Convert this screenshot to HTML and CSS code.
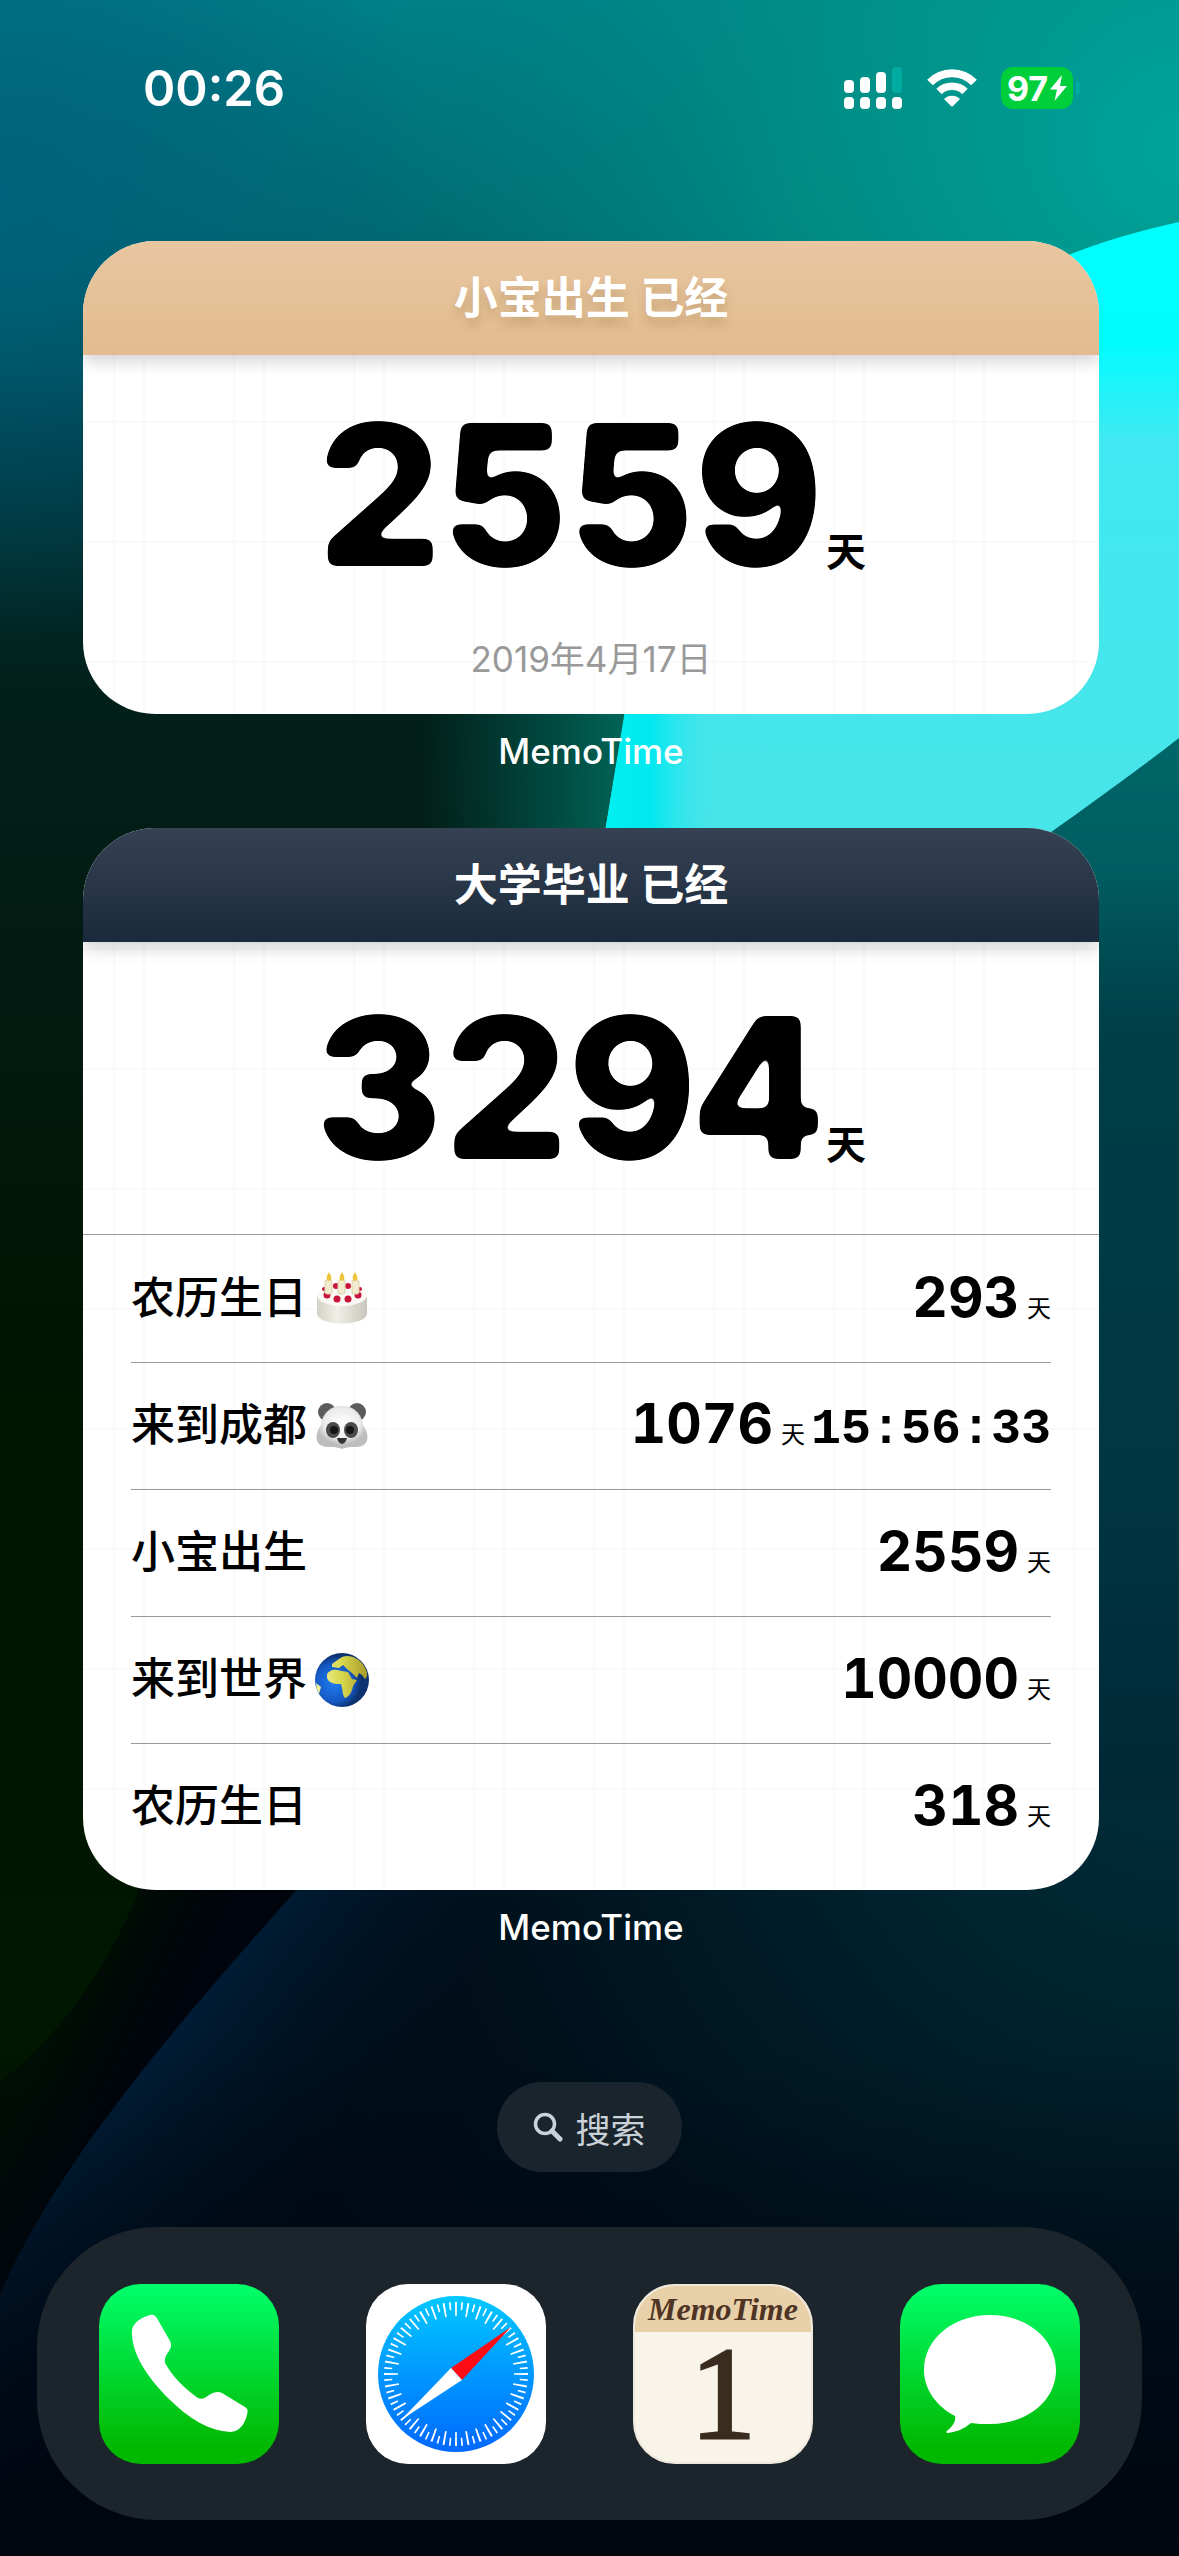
FILE: index.html
```html
<!DOCTYPE html>
<html lang="zh-CN">
<head>
<meta charset="utf-8">
<meta name="viewport" content="width=device-width, initial-scale=1">
<title>MemoTime</title>
<link rel="stylesheet" href="styles.css">
</head>
<body>
<svg class="wallpaper" viewBox="0 0 1179 2556" preserveAspectRatio="none" aria-hidden="true">
  <defs>
    <filter id="soften" x="-5%" y="-5%" width="110%" height="110%" color-interpolation-filters="sRGB">
      <feGaussianBlur stdDeviation="5"/>
      <feComponentTransfer><feFuncA type="linear" slope="14" intercept="-6.500"/></feComponentTransfer>
    </filter>
    <linearGradient id="base" x1="0" y1="0" x2="0" y2="1">
      <stop offset="0" stop-color="#008088"/>
      <stop offset=".09" stop-color="#006a70"/>
      <stop offset=".17" stop-color="#00353c"/>
      <stop offset=".27" stop-color="#02201a"/>
      <stop offset=".4" stop-color="#021a10"/>
      <stop offset=".55" stop-color="#001500"/>
      <stop offset=".8" stop-color="#001700"/>
      <stop offset="1" stop-color="#000610"/>
    </linearGradient>
    <radialGradient id="topRight" gradientUnits="userSpaceOnUse" cx="1179" cy="150" r="820">
      <stop offset="0" stop-color="#00a39a"/>
      <stop offset=".45" stop-color="#009488" stop-opacity=".8"/>
      <stop offset="1" stop-color="#008080" stop-opacity="0"/>
    </radialGradient>
    <radialGradient id="topLeft" gradientUnits="userSpaceOnUse" cx="0" cy="200" r="440">
      <stop offset="0" stop-color="#00607c" stop-opacity=".9"/>
      <stop offset=".5" stop-color="#00607c" stop-opacity=".5"/>
      <stop offset="1" stop-color="#006080" stop-opacity="0"/>
    </radialGradient>
    <linearGradient id="glow" gradientUnits="userSpaceOnUse" x1="420" y1="0" x2="640" y2="0">
      <stop offset="0" stop-color="#006058" stop-opacity="0"/>
      <stop offset="1" stop-color="#006a5c"/>
    </linearGradient>
    <linearGradient id="cyan" gradientUnits="userSpaceOnUse" x1="0" y1="220" x2="0" y2="830">
      <stop offset="0" stop-color="#00ffff"/>
      <stop offset=".2" stop-color="#00fcff"/>
      <stop offset=".36" stop-color="#40e9f2"/>
      <stop offset="1" stop-color="#48e4e8"/>
    </linearGradient>
    <linearGradient id="rim" gradientUnits="userSpaceOnUse" x1="605" y1="0" x2="720" y2="0">
      <stop offset="0" stop-color="#00f0f0"/>
      <stop offset=".4" stop-color="#00e8f0"/>
      <stop offset="1" stop-color="#48e4ea" stop-opacity="0"/>
    </linearGradient>
    <linearGradient id="right" gradientUnits="userSpaceOnUse" x1="0" y1="720" x2="0" y2="2000">
      <stop offset="0" stop-color="#006868"/>
      <stop offset=".12" stop-color="#005c60"/>
      <stop offset=".24" stop-color="#003e48"/>
      <stop offset=".6" stop-color="#003642"/>
      <stop offset=".8" stop-color="#002a38"/>
      <stop offset="1" stop-color="#001f2c"/>
    </linearGradient>
    <radialGradient id="deep" gradientUnits="userSpaceOnUse" cx="1179" cy="1700" r="1250">
      <stop offset="0" stop-color="#00303c"/>
      <stop offset=".3" stop-color="#00202c"/>
      <stop offset=".6" stop-color="#000f1a"/>
      <stop offset="1" stop-color="#000914"/>
    </radialGradient>
    <linearGradient id="edge" gradientUnits="userSpaceOnUse" x1="140" y1="2080" x2="310" y2="2210">
      <stop offset="0" stop-color="#001c34"/>
      <stop offset=".4" stop-color="#00162a" stop-opacity=".7"/>
      <stop offset="1" stop-color="#001020" stop-opacity="0"/>
    </linearGradient>
    <linearGradient id="floor" x1="0" y1="0" x2="0" y2="1">
      <stop offset="0" stop-color="#000610" stop-opacity="0"/>
      <stop offset="1" stop-color="#000610"/>
    </linearGradient>
    <linearGradient id="shade" gradientUnits="userSpaceOnUse" x1="70" y1="2000" x2="160" y2="2045">
      <stop offset="0" stop-color="#000e04"/>
      <stop offset=".4" stop-color="#000806"/>
      <stop offset="1" stop-color="#00040c"/>
    </linearGradient>
  </defs>
  <rect width="1179" height="2556" fill="url(#base)"/>
  <rect width="1179" height="700" fill="url(#topLeft)"/>
  <rect width="1179" height="1000" fill="url(#topRight)"/>
  <rect x="420" y="600" width="220" height="300" fill="url(#glow)"/>
  <rect x="900" y="600" width="279" height="1500" fill="url(#right)"/>
  <path d="M1179 222C1135 232 1100 242 1066 256C800 370 640 560 625 714L602 850L1026 850C1085 808 1130 776 1179 738Z" fill="url(#cyan)"/>
  <path d="M700 680H630L602 850H730Z" fill="url(#rim)"/>
  <path d="M170 1800L135 1900C105 1970 60 2035 0 2082V2556H500V1800Z" fill="url(#shade)"/>
  <path d="M376 1800C246 1950 70 2130 0 2295V2556H1179V1800Z" fill="url(#deep)"/>
  <path d="M376 1800C246 1950 70 2130 0 2295V2556H700V1800Z" fill="url(#edge)"/>
  <rect y="2050" width="1179" height="506" fill="url(#floor)"/>
</svg>

<div class="screen">
  <header class="status">
    <time class="clock">00:26</time>
    <div class="indicators">
      <svg class="signal" viewBox="0 0 60 42" role="img" aria-label="Signal">
        <g fill="#fff"><rect x="1" y="13" width="10" height="13" rx="4"/><rect x="17" y="10" width="10" height="16" rx="4"/><rect x="33" y="5" width="10" height="21" rx="4"/>
        <rect x="1" y="30" width="10" height="12" rx="4"/><rect x="17" y="30" width="10" height="12" rx="4"/><rect x="33" y="30" width="10" height="12" rx="4"/><rect x="49" y="30" width="10" height="12" rx="4"/></g>
        <rect x="49" y="0" width="10" height="26" rx="4" fill="#00aca2"/>
      </svg>
      <svg class="wifi" viewBox="0 0 50 38" role="img" aria-label="Wi-Fi">
        <g fill="none" stroke="#fff" stroke-width="8"><path d="M3 13.500C15 1 35 1 47 13.500"/><path d="M12 22.500C19 15.500 31 15.500 38 22.500" stroke-width="7.500"/></g>
        <path d="M17 30C21 25.500 29 25.500 33 30L26 37Q25 38 24 37Z" fill="#fff"/>
      </svg>
      <span class="battery">97<svg viewBox="0 0 17 26" aria-hidden="true"><path d="M12 0L0 14.500H7L4.500 26L17 11H10Z" fill="#fff"/></svg></span>
    </div>
  </header>

  <main class="widgets">
    <section class="widget">
      <div class="card medium">
        <h2 class="title sand">小宝出生 已经</h2>
        <div class="hero">
          <p class="count"><strong>2559</strong><span>天</span></p>
          <p class="date">2019年4月17日</p>
        </div>
      </div>
      <p class="name">MemoTime</p>
    </section>

    <section class="widget">
      <div class="card">
        <h2 class="title navy">大学毕业 已经</h2>
        <div class="hero tall">
          <p class="count"><strong>3294</strong><span>天</span></p>
        </div>
        <ul class="events">
          <li><span class="label">农历生日<svg class="emoji" viewBox="0 0 54 54" aria-hidden="true">
            <defs><linearGradient id="cakeSide"><stop offset="0" stop-color="#d5d2c8"/><stop offset=".4" stop-color="#f0eee6"/><stop offset="1" stop-color="#c9c6bd"/></linearGradient></defs>
            <path d="M2 22V41C2 55 52 55 52 41V22Z" fill="url(#cakeSide)"/><ellipse cx="27" cy="23" rx="25" ry="11" fill="#fbf9f4"/>
            <g fill="#c8143c"><circle cx="12" cy="23" r="3.500"/><circle cx="22" cy="27" r="3.500"/><circle cx="33" cy="27" r="3.500"/><circle cx="43" cy="23" r="3.500"/><circle cx="21" cy="14" r="3"/><circle cx="33" cy="14" r="3"/><circle cx="9" cy="17" r="2"/><circle cx="45" cy="17" r="2"/></g>
            <g fill="#f3ebcf" stroke="#ddd0a6"><rect x="10" y="8" width="7" height="14" rx="2"/><rect x="23" y="8" width="7" height="14" rx="2"/><rect x="37" y="8" width="7" height="14" rx="2"/></g>
            <path d="M14 0Q19 8 14 9Q9 8 14 0M27 0Q32 8 27 9Q22 8 27 0M40 0Q45 8 40 9Q35 8 40 0" fill="#ecc53c"/>
          </svg></span><span class="value"><b>293</b><small>天</small></span></li>
          <li><span class="label">来到成都<svg class="emoji" viewBox="0 0 54 54" aria-hidden="true">
            <defs><radialGradient id="fur" cy=".4"><stop offset="0" stop-color="#fff"/><stop offset=".7" stop-color="#ececec"/><stop offset="1" stop-color="#bdbdbd"/></radialGradient></defs>
            <circle cx="12" cy="13" r="9" fill="#5c5c5c"/><circle cx="42" cy="13" r="9" fill="#5c5c5c"/>
            <path d="M27 7C42 7 47 18 48 26C56 38 53 48 41 48C35 48 33 48 27 50C21 48 19 48 13 48C1 48-2 38 6 26C7 18 12 7 27 7Z" fill="url(#fur)"/>
            <ellipse cx="18" cy="31" rx="7" ry="8" fill="#4a4a4a"/><ellipse cx="36" cy="31" rx="7" ry="8" fill="#4a4a4a"/><circle cx="19" cy="31" r="4" fill="#151515"/><circle cx="35" cy="31" r="4" fill="#151515"/>
            <path d="M22 39H32Q31 44 27 45Q23 44 22 39Z" fill="#333"/>
          </svg></span><span class="value"><b>1076</b><small>天</small><time>15:56:33</time></span></li>
          <li><span class="label">小宝出生</span><span class="value"><b>2559</b><small>天</small></span></li>
          <li><span class="label">来到世界<svg class="emoji" viewBox="0 0 54 54" aria-hidden="true">
            <defs><radialGradient id="sea" cx=".35" cy=".55"><stop offset="0" stop-color="#1d7cf0"/><stop offset=".7" stop-color="#1659c4"/><stop offset="1" stop-color="#0c3270"/></radialGradient>
            <linearGradient id="land"><stop offset="0" stop-color="#eef0a0"/><stop offset=".5" stop-color="#d9d84c"/><stop offset="1" stop-color="#a89a2a"/></linearGradient></defs>
            <circle cx="27" cy="27" r="27" fill="url(#sea)"/>
            <path d="M12 21C14 18 18 16 22 17L27 18L33 19L37 26L42 27L38 33C37 39 34 44 30 45C27 42 28 36 26 31C21 31 14 31 12 25ZM17 11L21 8L27 4C35 1 44 5 49 13C53 19 53 24 50 26L47 22L44 20L42 25L37 20L32 16L28 12L24 15L17 14ZM1 30L6 34L4 41Q1 36 1 30Z" fill="url(#land)"/>
          </svg></span><span class="value"><b>10000</b><small>天</small></span></li>
          <li><span class="label">农历生日</span><span class="value"><b>318</b><small>天</small></span></li>
        </ul>
      </div>
      <p class="name">MemoTime</p>
    </section>
  </main>

  <button class="search" type="button">
    <svg viewBox="0 0 30 30" aria-hidden="true"><circle cx="12" cy="12" r="9.500" fill="none" stroke="#c9d2d8" stroke-width="3.500"/><path d="M19 19L27 27" stroke="#c9d2d8" stroke-width="5" stroke-linecap="round"/></svg>搜索
  </button>

  <nav class="dock">
    <a class="app green" href="#phone" aria-label="Phone">
      <svg viewBox="0 0 180 180" aria-hidden="true"><path d="M51 31C55 30 57 32 59 36L71 57C73 61 72 64 70 67C67 71 65 75 66 79C73 92 86 105 99 114C103 116 106 114 110 111C115 108 119 107 123 109L146 123C149 125 149 127 148 131C146 139 141 148 131 148C111 147 90 135 70 115C47 92 32 68 33 47C33 39 43 33 51 31Z" fill="#fff"/></svg>
    </a>
    <a class="app white" href="#safari" aria-label="Safari">
      <svg viewBox="0 0 180 180" aria-hidden="true">
        <defs><linearGradient id="dial" x1="0" y1="0" x2="0" y2="1"><stop offset="0" stop-color="#00c8ff"/><stop offset=".5" stop-color="#0098ff"/><stop offset="1" stop-color="#0068ff"/></linearGradient></defs>
        <circle cx="90" cy="90" r="78" fill="url(#dial)"/>
        <circle cx="90" cy="90" r="65" fill="none" stroke="#fff" stroke-width="14" pathLength="360" stroke-dasharray="1.600 8.400" stroke-dashoffset=".8"/>
        <circle cx="90" cy="90" r="68" fill="none" stroke="#fff" stroke-width="8" pathLength="360" stroke-dasharray="1.400 8.600" stroke-dashoffset="5.700"/>
        <path d="M145 43L96 96L85 84Z" fill="#ff0c14"/><path d="M35 136L85 84L96 96Z" fill="#fff"/>
      </svg>
    </a>
    <a class="app paper" href="#memotime" aria-label="MemoTime">
      <span class="brand">MemoTime</span><span class="day">1</span>
    </a>
    <a class="app green" href="#messages" aria-label="Messages">
      <svg viewBox="0 0 180 180" aria-hidden="true"><path d="M90 31C127 31 156 55 156 86C156 117 127 140 90 140C83 140 77 140 71 139C64 145 56 148 48 149C46 149 46 147 48 146C53 142 56 137 55 132C36 122 24 105 24 86C24 55 53 31 90 31Z" fill="#fff"/></svg>
    </a>
  </nav>
</div>
</body>
</html>
```

FILE: styles.css
```css
* { box-sizing: border-box; }

body {
  margin: 0;
  background: #000610;
  color: #000;
  font-family: Inter, "Noto Sans CJK SC", sans-serif;
}

p, h2, ul { margin: 0; padding: 0; }

.wallpaper {
  position: absolute;
  inset: 0;
  width: 100%;
  height: 100%;
  z-index: -1;
}

.screen {
  position: relative;
  min-height: 100vh;
  display: flex;
  flex-direction: column;
  padding-bottom: 36px;
}

/* Status bar */
.status {
  display: flex;
  justify-content: space-between;
  align-items: center;
  height: 176px;
  padding: 0 106px 0 143px;
  color: #fff;
}

.clock { font-size: 49px; font-weight: 600; }

.indicators { display: flex; align-items: center; gap: 24px; }
.signal { width: 60px; height: 42px; }
.wifi { width: 50px; height: 38px; }

.battery {
  position: relative;
  display: flex;
  align-items: center;
  justify-content: center;
  gap: 2px;
  width: 72px;
  height: 42px;
  border-radius: 12px;
  background: #00cf3c;
  font-size: 34px;
  font-weight: 700;
}
.battery svg { width: 17px; height: 26px; }
.battery::after {
  content: "";
  position: absolute;
  right: -7px;
  top: 14px;
  width: 4px;
  height: 14px;
  border-radius: 0 4px 4px 0;
  background: #00aca2;
}

/* Widgets */
.widgets {
  display: flex;
  flex-direction: column;
  gap: 52px;
  padding: 65px 80px 0 83px;
}

.card {
  --grid-top: 0px;
  border-radius: 72px;
  overflow: hidden;
  background-color: #fff;
  background-image:
    linear-gradient(90deg, #fafafa 2px, transparent 2px),
    linear-gradient(90deg, #fafafa 2px, transparent 2px),
    linear-gradient(#fafafa 2px, transparent 2px);
  background-size: 120px 100%, 120px 100%, 100% 120px;
  background-position: 30px 0, 60px 0, 0 var(--grid-top);
}
.medium { --grid-top: 60px; }

.title {
  height: 114px;
  color: #fff;
  font-size: 44px;
  font-weight: 700;
  line-height: 114px;
  text-align: center;
  box-shadow: 0 6px 16px rgba(0, 0, 30, .18);
}
.sand {
  background: linear-gradient(#e8c6a0, #e2bc8e);
  text-shadow: 0 8px 10px rgba(90, 60, 20, .2);
}
.navy { background: linear-gradient(#364254, #1a2a3a); }

.hero {
  display: flex;
  flex-direction: column;
  align-items: center;
  height: 359px;
  padding-top: 56px;
}
.tall { height: 292px; padding-top: 62px; }

.count { display: flex; align-items: baseline; gap: 4px; line-height: 168px; }
.count strong {
  font-size: 196px;
  font-weight: 800;
  font-variant-numeric: tabular-nums;
  filter: url(#soften);
}
.count span { font-size: 40px; font-weight: 700; line-height: 48px; }

.date { margin-top: 52px; color: #999; font-size: 35px; line-height: 56px; }

.name {
  padding-top: 12px;
  color: #fff;
  font-size: 35px;
  font-weight: 500;
  line-height: 50px;
  text-align: center;
}

.events {
  list-style: none;
  padding: 0 48px 20px;
  border-top: 1px solid #999;
}
.events li {
  display: flex;
  justify-content: space-between;
  align-items: center;
  height: 127px;
}
.events li + li { border-top: 1px solid #999; }

.label {
  display: flex;
  align-items: center;
  gap: 8px;
  padding-bottom: 8px;
  font-size: 44px;
  font-weight: 500;
}
.emoji { width: 54px; height: 54px; margin-top: 8px; }

.value { display: flex; align-items: baseline; padding-bottom: 4px; }
.value b { font-size: 55px; font-weight: 700; font-variant-numeric: tabular-nums; }
.value small { margin-left: 8px; font-size: 24px; }
.value time { margin-left: 6px; font: 700 50px "Liberation Mono", monospace; }

/* Search pill */
.search {
  display: flex;
  align-items: center;
  align-self: center;
  gap: 12px;
  height: 90px;
  margin-top: 130px;
  padding: 0 36px;
  border: 0;
  border-radius: 45px;
  background: #1a242c;
  color: #c9d2d8;
  font: 400 35px Inter, "Noto Sans CJK SC", sans-serif;
}
.search svg { width: 30px; height: 30px; }

/* Dock */
.dock {
  display: flex;
  justify-content: space-between;
  align-items: center;
  height: 293px;
  margin: 55px 37px 0;
  padding: 0 62px;
  border-radius: 120px;
  background: #1c242c;
}

.app {
  width: 180px;
  height: 180px;
  border-radius: 42px;
  text-decoration: none;
}
.app svg { display: block; width: 100%; height: 100%; }
.green { background: linear-gradient(#00ff6c, #00b800 90%); }
.white { background: #fff; }

.paper {
  display: flex;
  flex-direction: column;
  background: #f8f4ea;
  border: 2px solid #efe9dc;
  text-align: center;
}
.brand {
  height: 46px;
  border-radius: 40px 40px 0 0;
  background: #e8d0a8;
  color: #4e3424;
  font: italic 700 32px/46px "Liberation Serif", serif;
}
.day {
  color: #3a2c1e;
  font: 400 132px/124px "Liberation Serif", serif;
  -webkit-text-stroke: 3px #3a2c1e;
}
```
